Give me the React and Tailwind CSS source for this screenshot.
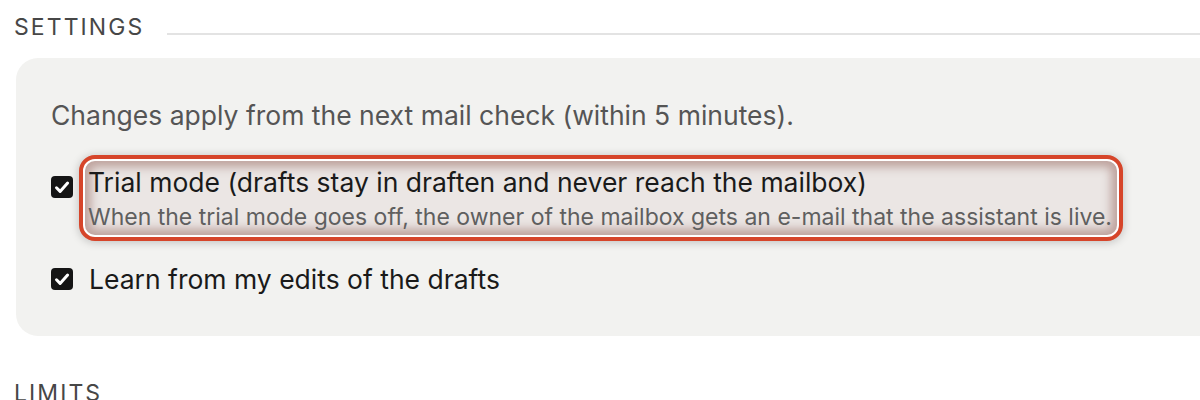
import { useState } from "react";

function Check({ checked, onChange }) {
  return (
    <span className="relative flex h-[22px] w-[22px] shrink-0 items-center justify-center rounded-[4px] bg-[#151515]">
      <input
        type="checkbox"
        checked={checked}
        onChange={onChange}
        className="sr-only"
      />
      {checked && (
        <svg viewBox="0 0 22 22" className="h-[22px] w-[22px]" fill="none">
          <path
            d="M5.5 11.8l3.6 3.6L16.6 7"
            stroke="white"
            strokeWidth="3"
            strokeLinecap="round"
            strokeLinejoin="round"
          />
        </svg>
      )}
    </span>
  );
}

export default function App() {
  const [trial, setTrial] = useState(true);
  const [learn, setLearn] = useState(true);

  return (
    <div className="min-h-[400px] w-[1200px] overflow-hidden bg-white font-['Inter',sans-serif]">
      {/* Settings header */}
      <div className="flex items-center gap-[23px] pl-[14px] pt-[12px]">
        <h2 className="text-[23px] leading-[30px] tracking-[0.09em] text-[#474747]">
          SETTINGS
        </h2>
        <div className="mt-[14px] h-[2px] flex-1 bg-[#e3e3e3]" />
      </div>

      {/* Settings card */}
      <div className="ml-[16px] mt-[16px] w-[1210px] rounded-[22px] bg-[#f2f2f0] pb-[39px] pl-[35px] pt-[39px]">
        <p className="text-[26.5px] leading-[36px] text-[#555]">
          Changes apply from the next mail check (within 5 minutes).
        </p>

        {/* Trial mode, highlighted */}
        <label className="mt-[22px] flex cursor-pointer items-center gap-[6px]">
          <span className="-mt-[22px]">
            <Check checked={trial} onChange={() => setTrial(!trial)} />
          </span>
          <div className="w-[1044px] rounded-[16px] border-[4px] border-[#d6452a] bg-white p-[2px] shadow-[0_1px_10px_rgba(0,0,0,0.22)]">
            <div className="rounded-[10px] bg-[#ebe6e4] pb-[1px] pl-[3px] pt-[3px] shadow-[inset_0_0_10px_6px_rgba(145,95,88,0.5)]">
              <div className="text-[26.5px] leading-[36px] text-[#1a1a1a]">
                Trial mode (drafts stay in draften and never reach the mailbox)
              </div>
              <div className="whitespace-nowrap text-[23px] leading-[34px] text-[#5f5f5f]">
                When the trial mode goes off, the owner of the mailbox gets an e-mail that the assistant is live.
              </div>
            </div>
          </div>
        </label>

        {/* Learn from edits */}
        <label className="mt-[20px] flex cursor-pointer items-center gap-[16px]">
          <Check checked={learn} onChange={() => setLearn(!learn)} />
          <span className="text-[26.5px] leading-[36px] text-[#1a1a1a]">
            Learn from my edits of the drafts
          </span>
        </label>
      </div>

      {/* Limits header */}
      <div className="pl-[14px] pt-[42px]">
        <h2 className="text-[23px] leading-[30px] tracking-[0.09em] text-[#474747]">
          LIMITS
        </h2>
      </div>
    </div>
  );
}
